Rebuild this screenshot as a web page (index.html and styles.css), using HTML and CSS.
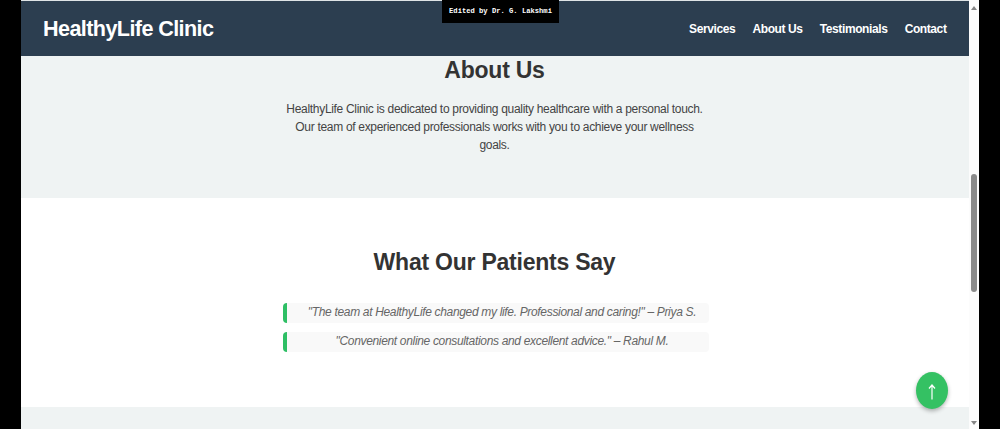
FILE: index.html
```
<!DOCTYPE html>
<html lang="en">
<head>
  <meta charset="UTF-8">
  <title>HealthyLife Clinic</title>
  <link rel="stylesheet" href="styles.css">
</head>
<body>

<div class="page">
  <header>
    <h1>HealthyLife Clinic</h1>
    <nav>
      <a href="#services">Services</a>
      <a href="#about">About Us</a>
      <a href="#testimonials">Testimonials</a>
      <a href="#contact">Contact</a>
    </nav>
  </header>

  <section class="about" id="about">
    <h2>About Us</h2>
    <p>HealthyLife Clinic is dedicated to providing quality healthcare with a personal touch.<br>
      Our team of experienced professionals works with you to achieve your wellness<br>
      goals.</p>
  </section>

  <section class="testimonials" id="testimonials">
    <h2>What Our Patients Say</h2>
    <blockquote class="quote-one">"The team at HealthyLife changed my life. Professional and caring!" – Priya S.</blockquote>
    <blockquote class="quote-two">"Convenient online consultations and excellent advice." – Rahul M.</blockquote>
  </section>

  <section class="contact" id="contact"></section>
</div>

<!-- Scrollbar -->
<div class="scrollbar">
  <svg class="arrow" viewBox="0 0 6 4"><path d="M3 0L6 4H0z"/></svg>
  <div class="thumb"></div>
  <svg class="arrow" viewBox="0 0 6 4"><path d="M0 0H6L3 4z"/></svg>
</div>

<div class="edited-by">Edited by Dr. G. Lakshmi</div>
<a class="to-top" href="#" aria-label="Back to top">
  <svg width="8" height="16" viewBox="0 0 8 16"><path d="M4 15.5V1M1 4.5L4 1L7 4.5"/></svg>
</a>

</body>
</html>
```
FILE: styles.css
```
* {
  box-sizing: border-box;
}
body {
  margin: 0;
  height: 429px;
  padding: 0 21px;
  display: flex;
  overflow: hidden;
  position: relative;
  background: #000;
  color: #333;
  font-family: "Liberation Sans", Arial, sans-serif;
}
.page {
  width: 948px;
  background: #fff;
}
header {
  height: 56px;
  padding: 0 22px;
  display: flex;
  justify-content: space-between;
  align-items: center;
  background: #2c3e50;
  border-top: 1px solid #dfe4e6;
  color: #fff;
}
header h1 {
  margin: 0;
  font-size: 21.6px;
  letter-spacing: -0.6px;
}
nav {
  display: flex;
  gap: 17.2px;
  padding-right: 0.5px;
}
nav a {
  color: #fff;
  font-size: 12px;
  font-weight: bold;
  letter-spacing: -0.4px;
  text-decoration: none;
}
section {
  text-align: center;
}
h2 {
  margin: 0;
  padding-right: 1px;
  font-size: 23px;
  letter-spacing: -0.23px;
  line-height: 28px;
}
.about {
  height: 142px;
  background: #eff3f3;
}
.about p {
  margin: 16px 0 0;
  padding-right: 1px;
  font-size: 12px;
  letter-spacing: -0.31px;
  line-height: 18px;
  color: #444;
}
.testimonials {
  height: 209px;
  padding-top: 50px;
}
blockquote {
  width: 426px;
  height: 20px;
  margin: 0 0 9px 262px;
  padding-left: 8px;
  background: #f9f9f9;
  border-left: 4px solid #2ebf65;
  border-radius: 4px;
  color: #666;
  font-size: 12px;
  font-style: italic;
  letter-spacing: -0.33px;
  line-height: 19px;
}
.quote-one {
  margin-top: 27px;
}
.contact {
  height: 22px;
  background: #eff3f3;
}

/* Scrollbar */
.scrollbar {
  width: 10px;
  padding: 6px 2px 4px;
  display: flex;
  flex-direction: column;
  align-items: center;
  justify-content: space-between;
  background: #fcfcfc;
}
.thumb {
  width: 6px;
  height: 118px;
  margin-top: 34px;
  border-radius: 3px;
  background: #8b8b8b;
}
.arrow {
  width: 6px;
  height: 4px;
  fill: #858585;
}

/* Overlays */
.edited-by {
  position: absolute;
  top: 0;
  left: 442px;
  width: 117px;
  height: 23px;
  background: #000;
  color: #fff;
  font: bold 7.15px/23px "Liberation Mono", monospace;
  text-align: center;
  white-space: nowrap;
}
.to-top {
  position: absolute;
  top: 372px;
  left: 916px;
  width: 32px;
  height: 37px;
  display: flex;
  align-items: center;
  justify-content: center;
  padding-top: 2px;
  border-radius: 50%;
  background: #34c163;
  box-shadow: 0 2px 4px rgba(0,0,0,0.3);
}
.to-top svg {
  fill: none;
  stroke: #fff;
  stroke-width: 1.2;
}
```
